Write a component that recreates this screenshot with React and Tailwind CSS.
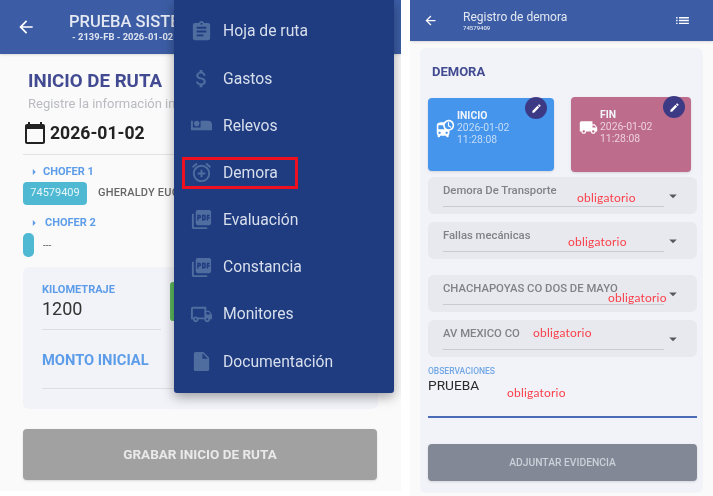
import {
  MdArrowBack,
  MdAssignment,
  MdAttachMoney,
  MdAirlineSeatIndividualSuite,
  MdAlarmAdd,
  MdPictureAsPdf,
  MdOutlineLocalShipping,
  MdInsertDriveFile,
  MdCalendarToday,
  MdArrowRight,
  MdArrowDropDown,
  MdEdit,
  MdDepartureBoard,
  MdLocalShipping,
  MdList,
} from "react-icons/md";

const menuItems = [
  { label: "Hoja de ruta", icon: MdAssignment },
  { label: "Gastos", icon: MdAttachMoney },
  { label: "Relevos", icon: MdAirlineSeatIndividualSuite },
  { label: "Demora", icon: MdAlarmAdd, active: true },
  { label: "Evaluación", icon: MdPictureAsPdf },
  { label: "Constancia", icon: MdPictureAsPdf },
  { label: "Monitores", icon: MdOutlineLocalShipping },
  { label: "Documentación", icon: MdInsertDriveFile },
];

const Obligatorio = ({ className }) => (
  <span
    className={`absolute text-[12px] leading-none tracking-[0.2px] text-[#fb3f4a] font-['Lato',sans-serif] ${className}`}
  >
    obligatorio
  </span>
);

const Select = ({ label, note, className }) => (
  <div className={`relative h-[37px] rounded-md bg-[#e8e9ee] pl-[15px] pr-[33px] ${className}`}>
    <div className="h-[30px] border-b border-[#c9cbd2] pt-[6.5px] text-[11.3px] leading-[14px] font-medium whitespace-nowrap text-[#808289]">
      {label}
    </div>
    <MdArrowDropDown className="absolute right-[15px] top-[10px] text-[18px] text-[#55585f]" />
    {note}
  </div>
);

const RoutePanel = () => (
  <div className="relative h-[491px] w-[401px] shrink-0 overflow-hidden bg-[#fafafa]">
    <header className="flex h-[54px] items-center bg-[#3c5da5] pl-[16px] text-white shadow">
      <MdArrowBack className="text-[20px]" />
      <div className="ml-[33px] whitespace-nowrap">
        <div className="text-[16.5px] leading-[18px] font-medium text-[#e3e8f2]">PRUEBA SISTEMA</div>
        <div className="pl-[3px] text-[9.4px] leading-[11px] font-bold text-[#dfe5f0]">- 2139-FB - 2026-01-02</div>
      </div>
    </header>

    <div className="px-[23px] pt-[16px]">
      <h1 className="pl-[5px] text-[18.7px] leading-[22px] font-bold text-[#424b91]">INICIO DE RUTA</h1>
      <p className="mt-[4px] pl-[5px] text-[13px] leading-[16px] whitespace-nowrap text-[#b9bbc0]">
        Registre la información inicial
      </p>
      <div className="mt-[8px] flex h-[26px] items-center gap-[3px] font-bold text-[#222]">
        <MdCalendarToday className="text-[24px]" />
        <span className="text-[17.6px]">2026-01-02</span>
      </div>
      <div className="mt-[8px] h-px bg-[#e2e2e2]" />

      <div className="mt-[10px] flex h-[14px] items-center pl-[4px] text-[11px] font-bold text-[#5d9ce8]">
        <MdArrowRight className="text-[14px]" />
        <span className="ml-[2px]">CHOFER 1</span>
      </div>
      <div className="mt-[3px] flex items-center">
        <span className="flex h-[23px] w-[64px] items-center justify-center rounded-[4px] bg-[#4fb9d3] text-[11px] text-[#e6f6fa]">
          74579409
        </span>
        <span className="ml-[11px] text-[11px] font-medium tracking-[0.2px] whitespace-nowrap text-[#666]">GHERALDY EUGENIO</span>
      </div>
      <div className="mt-[11px] flex h-[14px] items-center pl-[4px] text-[11px] font-bold text-[#5d9ce8]">
        <MdArrowRight className="text-[14px]" />
        <span className="ml-[4px]">CHOFER 2</span>
      </div>
      <div className="mt-[3px] flex items-center">
        <span className="h-[24px] w-[11px] rounded-[5px] bg-[#4fb9d3]" />
        <span className="ml-[9px] text-[10px] text-[#666]">---</span>
      </div>

      <div className="mt-[10px] h-[142px] w-[355px] rounded-md bg-[#f1f3f8] pt-[17px] pl-[19px]">
        <div className="flex">
          <div className="w-[119px] shrink-0">
            <div className="text-[11px] leading-[12px] font-bold whitespace-nowrap text-[#5d9ce8]">KILOMETRAJE</div>
            <div className="mt-[1px] h-[33px] border-b border-[#dcdee3] text-[18px] leading-[24px] text-[#333]">1200</div>
          </div>
          <div className="mt-[-2px] ml-[9px] h-[39px] w-[40px] rounded-[3px] bg-[#5cb85c]" />
        </div>
        <div className="mt-[21px] h-[38px] w-[160px] border-b border-[#dcdee3] text-[14.7px] leading-[18px] font-bold whitespace-nowrap text-[#5d9ce8]">
          MONTO INICIAL
        </div>
      </div>

      <button className="mt-[20px] h-[51px] w-[354px] rounded-[4px] bg-[#a1a1a1] text-[13.5px] font-bold text-[#e9e9e9] shadow-sm">
        GRABAR INICIO DE RUTA
      </button>
    </div>

    <nav className="absolute top-0 left-[174px] h-[393px] w-[220px] rounded-b-[3px] bg-[#1f3c80] pt-[7.5px] shadow-[0_4px_12px_rgba(0,0,0,0.35)]">
      {menuItems.map(({ label, icon: Icon, active }) => (
        <div key={label} className="relative flex h-[47.2px] items-center">
          <div className="flex w-[49px] justify-center pl-[5px]">
            <Icon className="text-[23px] text-[#4f6d9e]" />
          </div>
          <span className="text-[15.7px] text-[#d8dfec]">{label}</span>
          {active && (
            <span className="absolute top-[8px] left-[8px] h-[32px] w-[116px] border-[3px] border-[#ee0f1f]" />
          )}
        </div>
      ))}
    </nav>
  </div>
);

const Tile = ({ title, icon: Icon, className, badge, dateColor }) => (
  <div className={`relative flex items-start rounded-[4px] pt-[12px] pl-[8px] shadow-sm ${className}`}>
    <Icon className="mt-[9px] shrink-0 text-[19px] text-white" />
    <div className={`ml-[2px] text-[10.4px] leading-[12px] ${dateColor}`}>
      <div className="font-bold text-[#f1f5fb]">{title}</div>
      <div>2026-01-02</div>
      <div>11:28:08</div>
    </div>
    <span className={`absolute flex h-[22px] w-[22px] items-center justify-center rounded-full bg-[#3d3a85] ${badge}`}>
      <MdEdit className="text-[11px] text-white" />
    </span>
  </div>
);

const DelayPanel = () => (
  <div className="ml-[9px] h-[496px] w-[303px] shrink-0 overflow-hidden bg-[#fafafa]">
    <header className="flex h-[41px] items-center bg-[#3c5da5] pr-[22px] pl-[13px] text-white shadow">
      <MdArrowBack className="text-[15px]" />
      <div className="ml-[25px] flex-1">
        <div className="text-[12px] leading-[14px] text-[#e3e8f2]">Registro de demora</div>
        <div className="text-[6px] leading-[7px] font-medium text-[#dfe5f0]">74579409</div>
      </div>
      <MdList className="text-[17px]" />
    </header>

    <div className="mx-[10px] mt-[7px] h-[445px] rounded-md bg-[#f1f3f8] pt-[16px] pr-[6px] pl-[8px]">
      <h2 className="pl-[4px] text-[13px] leading-[16px] font-bold text-[#424b91]">DEMORA</h2>

      <div className="mt-[18px] flex items-start">
        <Tile
          title="INICIO"
          icon={MdDepartureBoard}
          className="h-[73px] w-[126px] bg-[#4595ec]"
          dateColor="text-[#c3dcf8]"
          badge="right-[7px] -top-[1px]"
        />
        <Tile
          title="FIN"
          icon={MdLocalShipping}
          className="ml-[17px] h-[75px] w-[120px] -translate-y-px bg-[#bd6c8b]"
          dateColor="text-[#ecd0db]"
          badge="right-[6px] -top-[1px]"
        />
      </div>

      <Select
        className="mt-[4px]"
        label="Demora De Transporte"
        note={<Obligatorio className="top-[15px] left-[149px]" />}
      />
      <Select
        className="mt-[8px]"
        label="Fallas mecánicas"
        note={<Obligatorio className="top-[14px] left-[140px]" />}
      />
      <Select
        className="mt-[16px]"
        label="CHACHAPOYAS CO DOS DE MAYO"
        note={<Obligatorio className="top-[17px] left-[180px]" />}
      />
      <Select
        className="mt-[8px]"
        label="AV MEXICO CO"
        note={<Obligatorio className="top-[7px] left-[105px]" />}
      />

      <div className="relative mt-[9px] h-[52px] border-b-2 border-[#4a6cb6]">
        <div className="text-[8.5px] leading-[10px] font-medium text-[#71a7e6]">OBSERVACIONES</div>
        <div className="text-[13.7px] leading-[18px] text-[#2b2b2b]">PRUEBA</div>
        <Obligatorio className="top-[21px] left-[79px]" />
      </div>

      <button className="mt-[26px] h-[37px] w-full rounded-[4px] bg-[#838897] text-[10.3px] font-medium text-[#ccd0d8] shadow-sm">
        ADJUNTAR EVIDENCIA
      </button>
    </div>
  </div>
);

export default function App() {
  return (
    <div className="flex h-[496px] w-[713px] overflow-hidden bg-white font-['Roboto',sans-serif] blur-[0.6px]">
      <RoutePanel />
      <DelayPanel />
    </div>
  );
}
